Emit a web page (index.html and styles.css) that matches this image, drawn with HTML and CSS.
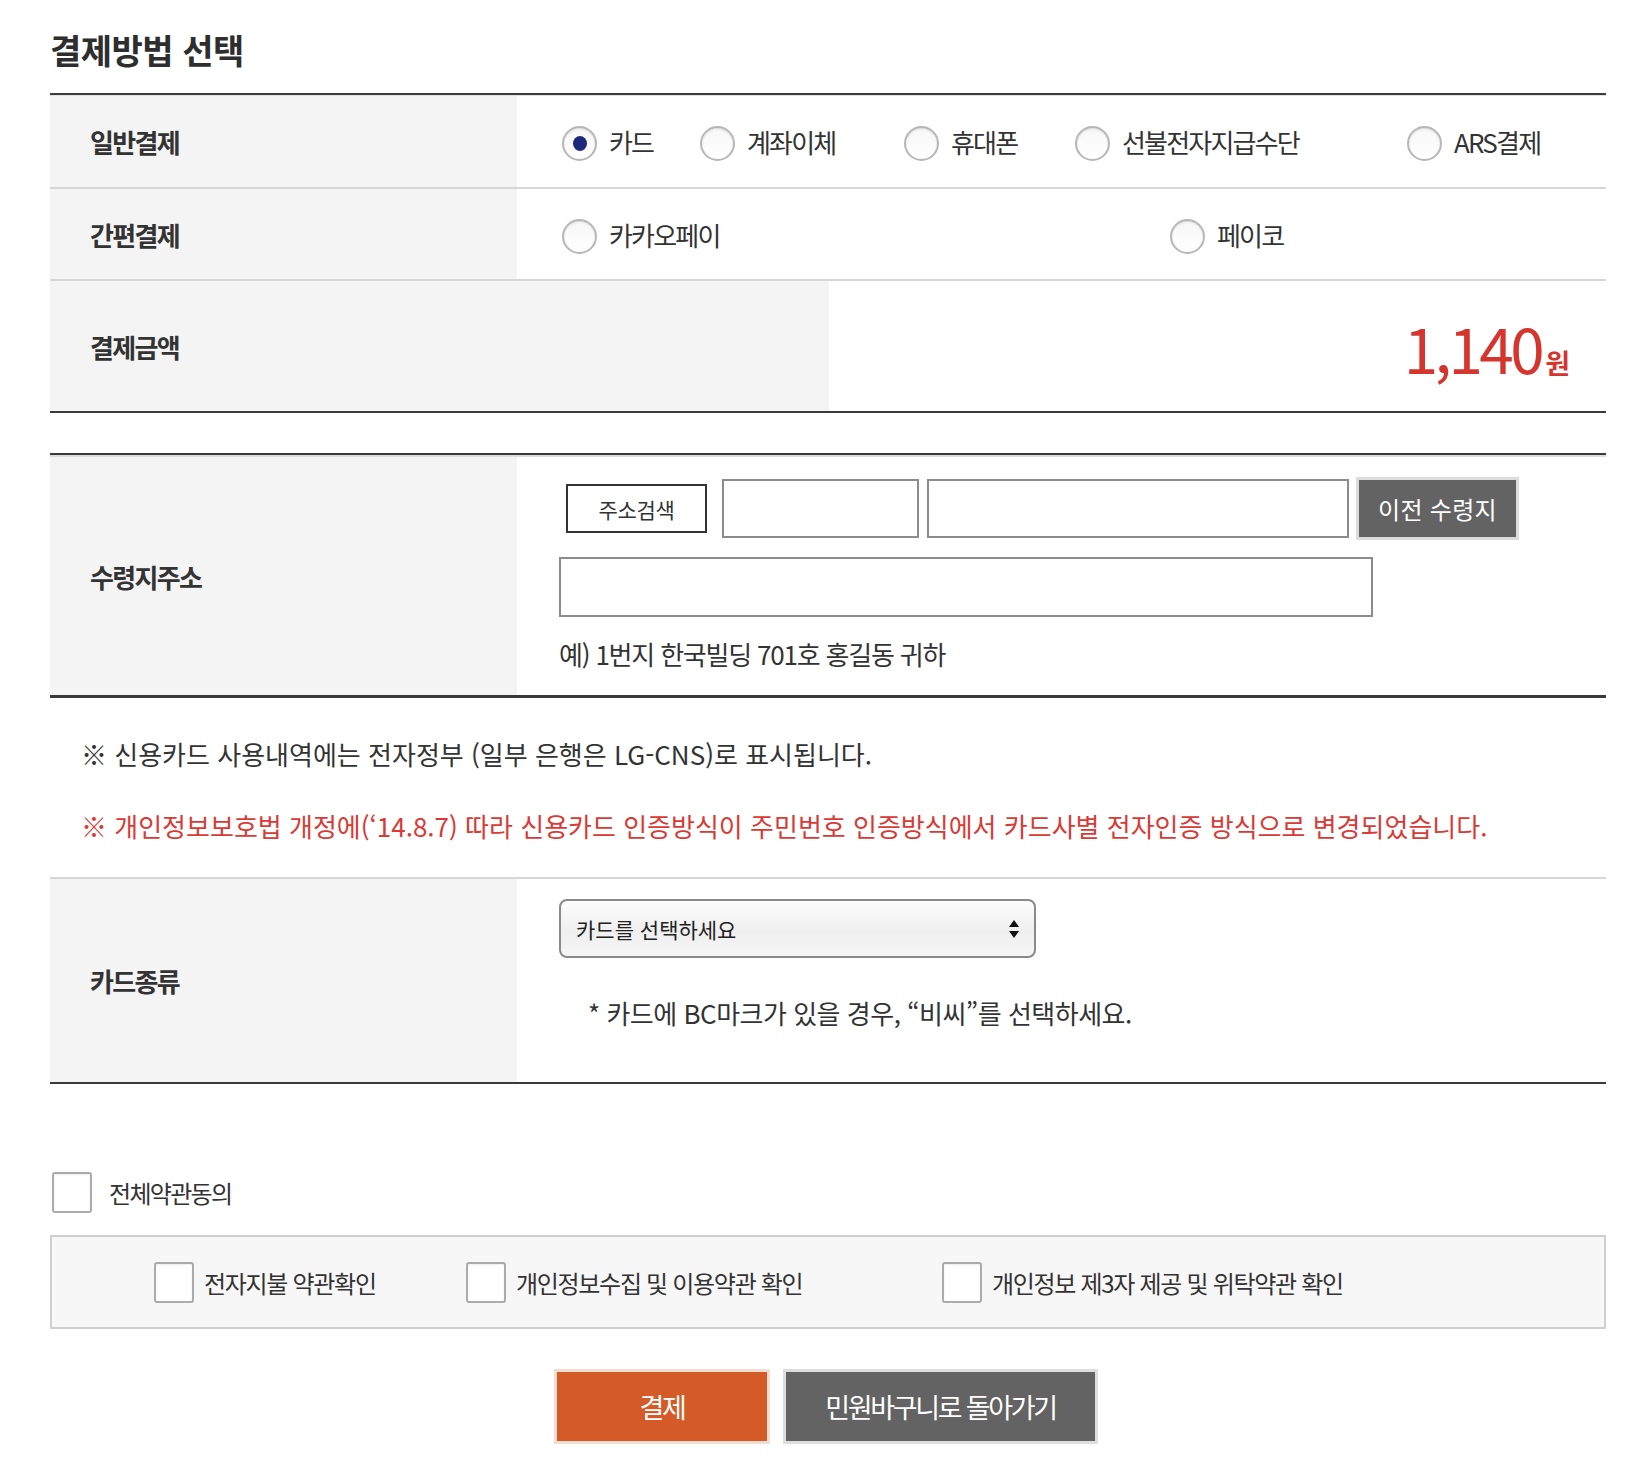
FILE: index.html
```html
<!DOCTYPE html>
<html lang="ko">
<head>
<meta charset="utf-8">
<title>결제방법 선택</title>
<link rel="stylesheet" href="styles.css">
</head>
<body>
<div class="page">
  <h2 class="title">결제방법 선택</h2>

  <div class="tbl tbl-pay">
    <div class="row row-general">
      <div class="th">일반결제</div>
      <div class="td radios radios-5">
        <label class="radio-item"><span class="radio on"><span class="dot"></span></span><span>카드</span></label>
        <label class="radio-item"><span class="radio"></span><span>계좌이체</span></label>
        <label class="radio-item"><span class="radio"></span><span>휴대폰</span></label>
        <label class="radio-item"><span class="radio"></span><span>선불전자지급수단</span></label>
        <label class="radio-item"><span class="radio"></span><span>ARS결제</span></label>
      </div>
    </div>
    <div class="row row-simple">
      <div class="th">간편결제</div>
      <div class="td radios radios-2">
        <label class="radio-item"><span class="radio"></span><span>카카오페이</span></label>
        <label class="radio-item"><span class="radio"></span><span>페이코</span></label>
      </div>
    </div>
    <div class="row row-amount">
      <div class="th th-wide">결제금액</div>
      <div class="td amount">
        <span class="amount-val"><span class="num">1,140</span><span class="won">원</span></span>
      </div>
    </div>
  </div>

  <div class="tbl tbl-addr">
    <div class="row row-addr">
      <div class="th">수령지주소</div>
      <div class="td addr">
        <div class="addr-line">
          <button class="btn-search" type="button">주소검색</button>
          <input class="in in-zip" type="text">
          <input class="in in-addr1" type="text">
          <button class="btn-prev" type="button">이전 수령지</button>
        </div>
        <input class="in in-addr2" type="text">
        <p class="addr-hint">예) 1번지 한국빌딩 701호 홍길동 귀하</p>
      </div>
    </div>
  </div>

  <div class="notices">
    <p class="notice">※ 신용카드 사용내역에는 전자정부 (일부 은행은 LG-CNS)로 표시됩니다.</p>
    <p class="notice notice-red">※ 개인정보보호법 개정에(‘14.8.7) 따라 신용카드 인증방식이 주민번호 인증방식에서 카드사별 전자인증 방식으로 변경되었습니다.</p>
  </div>

  <div class="tbl tbl-card">
    <div class="row row-card">
      <div class="th">카드종류</div>
      <div class="td card">
        <div class="select">
          <span>카드를 선택하세요</span>
          <svg class="select-arrow" width="12" height="20" viewBox="0 0 12 20"><path d="M6 1 L11 8 L1 8 Z M6 19 L11 12 L1 12 Z" fill="#111"/></svg>
        </div>
        <p class="card-hint">* 카드에 BC마크가 있을 경우, “비씨”를 선택하세요.</p>
      </div>
    </div>
  </div>

  <label class="agree-all"><span class="chk"></span><span class="agree-label">전체약관동의</span></label>

  <div class="terms">
    <label class="term"><span class="chk"></span><span>전자지불 약관확인</span></label>
    <label class="term"><span class="chk"></span><span>개인정보수집 및 이용약관 확인</span></label>
    <label class="term"><span class="chk"></span><span>개인정보 제3자 제공 및 위탁약관 확인</span></label>
  </div>

  <div class="actions">
    <button class="btn-pay" type="button">결제</button>
    <button class="btn-back" type="button">민원바구니로 돌아가기</button>
  </div>
</div>
</body>
</html>
```

FILE: styles.css
```css
* { box-sizing: border-box; }

body {
  margin: 0;
  background: #fff;
  color: #333;
  font-family: "Noto Sans CJK KR", "Noto Sans", sans-serif;
}

p { margin: 0; }

.page {
  padding: 0 38px 36px 50px;
}

.title {
  margin: 0;
  height: 93px;
  padding-top: 28px;
  font-size: 34px;
  line-height: 44px;
  font-weight: 700;
  letter-spacing: -0.5px;
  color: #2e2e2e;
}

/* tables */
.tbl {
  border-top: 2px solid #3a3a3a;
}

.row {
  display: flex;
}

.tbl-pay .row-general { border-top: 1px solid #e0e0e0; height: 92px; }
.tbl-pay .row-simple { border-top: 2px solid #d6d6d6; height: 92px; }
.tbl-pay .row-amount { border-top: 2px solid #d6d6d6; height: 132px; }
.tbl-pay { border-bottom: 2px solid #3a3a3a; }

.th {
  flex: 0 0 467px;
  display: flex;
  align-items: center;
  padding-left: 40px;
  background: #f4f4f4;
  font-size: 26px;
  font-weight: 700;
  letter-spacing: -1.7px;
  color: #333;
}

.th-wide { flex-basis: 779px; }

.td {
  flex: 1;
  background: #fff;
}

/* radios */
.radios {
  display: grid;
  align-items: center;
  padding-left: 45px;
}

.radios-5 { grid-template-columns: 138px 204px 171px 332px auto; }
.radios-2 { grid-template-columns: 608px auto; }

.radio-item {
  display: flex;
  align-items: center;
  gap: 12px;
  font-size: 26px;
  letter-spacing: -1.8px;
  color: #333;
  white-space: nowrap;
}

.radio {
  flex: 0 0 35px;
  width: 35px;
  height: 35px;
  margin-top: 4px;
  border-radius: 50%;
  border: 2px solid #b7b7b7;
  background: linear-gradient(#f7f7f7, #ffffff);
  box-shadow: inset 0 1px 2px rgba(0, 0, 0, 0.12);
  display: flex;
  align-items: center;
  justify-content: center;
}

.radio .dot {
  width: 14px;
  height: 15px;
  border-radius: 50%;
  background: #1d2a7c;
}

/* amount */
.amount {
  display: flex;
  justify-content: flex-end;
  align-items: center;
  padding-right: 38px;
}

.amount-val {
  display: flex;
  align-items: baseline;
  color: #d6352f;
  margin-top: 6px;
}

.amount-val .num {
  font-size: 62px;
  line-height: 1;
  letter-spacing: -3.5px;
}

.amount-val .won {
  font-size: 27px;
  font-weight: 700;
  letter-spacing: -2px;
  margin-left: 4px;
}

/* address */
.tbl-addr {
  margin-top: 40px;
  border-bottom: 3px solid #3a3a3a;
}

.row-addr { border-top: 2px solid #dcdcdc; }

.addr {
  padding: 20px 0 23px 42px;
}

.addr-line {
  display: flex;
  align-items: center;
  height: 63px;
}

.btn-search {
  margin: 0 0 0 7px;
  width: 141px;
  height: 49px;
  border: 2px solid #333;
  background: #fff;
  color: #333;
  font-family: inherit;
  font-size: 21px;
  letter-spacing: -0.3px;
  padding: 0;
}

.in {
  display: block;
  margin: 0;
  height: 59px;
  border: 2px solid #8c8c8c;
  background: #fff;
  font-family: inherit;
  font-size: 22px;
  padding: 0 10px;
}

.in-zip { margin-left: 15px; width: 197px; }
.in-addr1 { margin-left: 8px; width: 422px; }
.in-addr2 { margin-top: 17px; width: 814px; height: 60px; }

.btn-prev {
  margin: 0 0 0 7px;
  width: 163px;
  height: 63px;
  padding: 0;
  border: 3px solid #dcdcdc;
  background: #636363;
  color: #fff;
  font-family: inherit;
  font-size: 24px;
  letter-spacing: 0.3px;
}

.addr-hint {
  margin-top: 19px;
  line-height: 36px;
  font-size: 26px;
  letter-spacing: -1.2px;
  color: #333;
}

/* notices */
.notices {
  padding: 38px 0 33px 31px;
}

.notice {
  line-height: 36px;
  font-size: 26px;
  letter-spacing: 0;
  color: #333;
  white-space: nowrap;
}

.notice + .notice { margin-top: 36px; }

.notice-red { color: #d93a35; }

/* card */
.tbl-card {
  border-top: 2px solid #d6d6d6;
  border-bottom: 2px solid #3a3a3a;
}

.card {
  padding: 20px 0 51px 42px;
}

.select {
  width: 477px;
  height: 59px;
  border: 2px solid #8a8a8a;
  border-radius: 8px;
  background: linear-gradient(#fdfdfd 0%, #efefef 55%, #f6f6f6 100%);
  display: flex;
  align-items: center;
  justify-content: space-between;
  padding: 0 14px 0 15px;
  font-size: 21px;
  letter-spacing: 0;
  color: #222;
}

.select-arrow { display: block; }

.card-hint {
  margin-top: 37px;
  padding-left: 29px;
  line-height: 36px;
  font-size: 26px;
  letter-spacing: -0.5px;
  color: #333;
}

/* agreements */
.chk {
  flex: 0 0 40px;
  width: 40px;
  height: 41px;
  border: 2px solid #ababab;
  border-radius: 3px;
  background: #fff;
  box-shadow: inset 0 1px 2px rgba(0, 0, 0, 0.08);
}

.agree-all {
  display: flex;
  align-items: center;
  margin: 88px 0 0 2px;
  height: 40px;
}

.agree-label {
  margin-left: 17px;
  font-size: 24px;
  letter-spacing: -1.7px;
  color: #333;
}

.terms {
  margin-top: 23px;
  height: 94px;
  border: 2px solid #cfcfcf;
  background: #f7f7f7;
  display: grid;
  grid-template-columns: 312px 476px auto;
  align-items: center;
  padding-left: 102px;
}

.term {
  display: flex;
  align-items: center;
  gap: 10px;
  font-size: 24px;
  letter-spacing: -1.3px;
  color: #333;
  white-space: nowrap;
}

/* buttons */
.actions {
  margin-top: 40px;
  display: flex;
  justify-content: center;
  gap: 13px;
  padding-right: 4px;
}

.btn-pay,
.btn-back {
  height: 75px;
  padding: 0;
  color: #fff;
  font-family: inherit;
  font-size: 27px;
  letter-spacing: -2.3px;
}

.btn-pay {
  width: 216px;
  background: #d45b28;
  border: 3px solid #f2ddd3;
}

.btn-back {
  width: 315px;
  background: #636363;
  border: 3px solid #dedede;
}
```
